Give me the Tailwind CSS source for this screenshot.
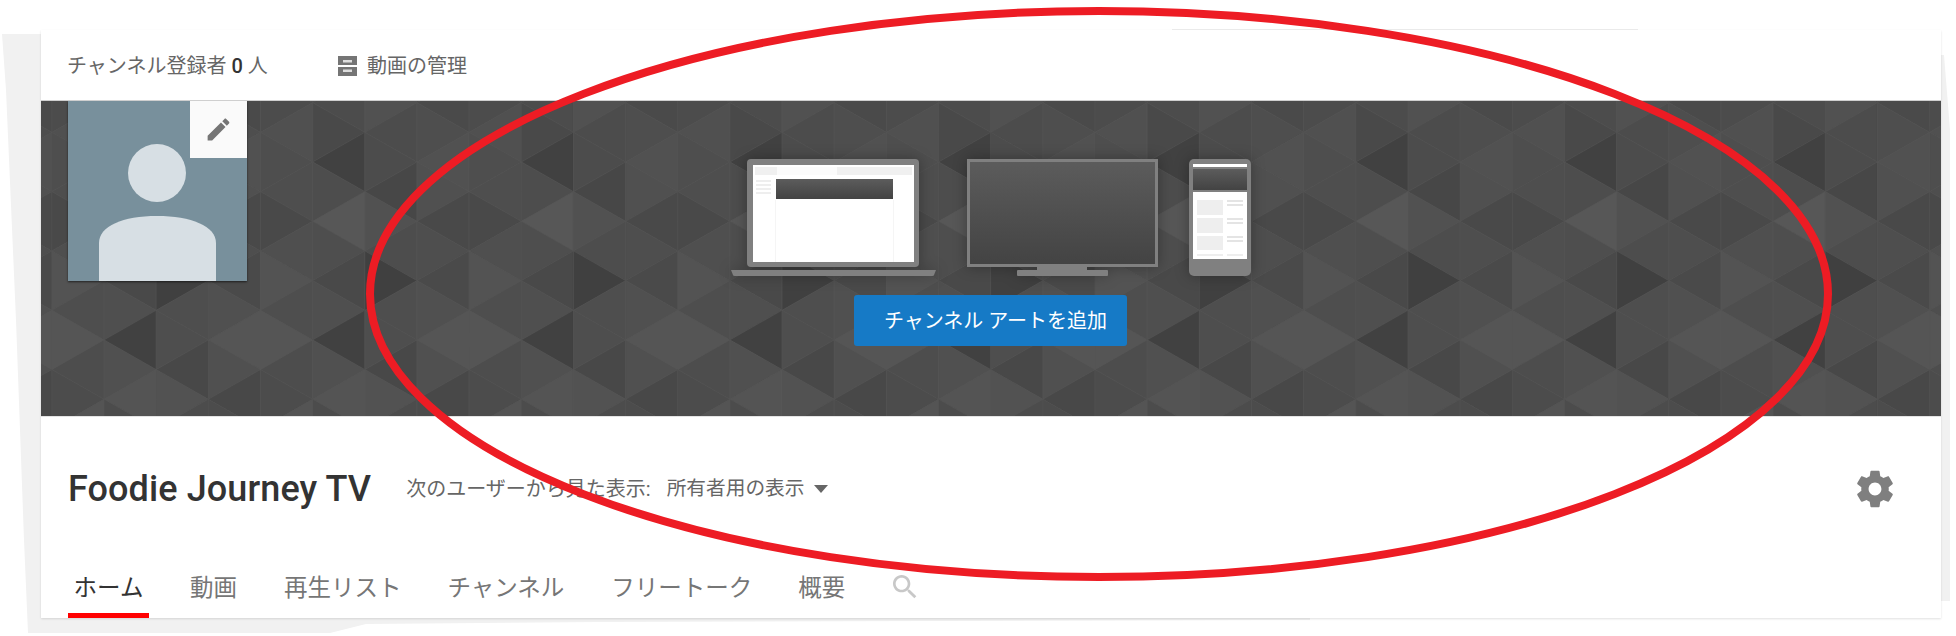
<!DOCTYPE html>
<html lang="ja">
<head>
<meta charset="utf-8">
<title>Foodie Journey TV</title>
<script src="https://cdn.jsdelivr.net/npm/@tailwindcss/browser@4"></script>
</head>
<body class="bg-white overflow-hidden">
<div class="relative w-[1956px] h-[636px] overflow-hidden bg-white font-['Roboto','Noto_Sans_CJK_JP',sans-serif]">
  <!-- torn grey edge of the pasted capture -->
  <svg class="absolute left-0 top-0" width="1956" height="636" viewBox="0 0 1956 636" fill="#f1f1f1">
    <polygon points="2,34 41,34 41,618 1310,618 1310,620 600,622 366,624 330,633 28,633 24,540 16,320 6,90"/>
    <polygon points="1941,55 1944,55 1950,130 1950,601 1941,601"/>
    <rect x="1172" y="29" width="466" height="1.5" fill="#ececec"/>
  </svg>

  <!-- channel card -->
  <div class="absolute left-[41px] top-[30px] w-[1900px] flex flex-col bg-white shadow-[0_1px_2px_rgba(0,0,0,0.12)]">
    <div class="h-[70px] flex items-center pl-[26px] pt-[2px] text-[20px] text-[#666]">
      <span class="w-[271px]">チャンネル登録者 <b class="font-medium text-[#333]">0</b> 人</span>
      <span class="flex items-center gap-[10px] text-[20px]">
        <svg width="19" height="20" viewBox="0 0 19 20"><rect width="19" height="9" fill="#757575"/><rect y="11" width="19" height="9" fill="#757575"/><rect x="5" y="4" width="9" height="2.5" fill="#ddd"/><rect x="5" y="13.5" width="9" height="2.5" fill="#ddd"/></svg>
        動画の管理
      </span>
    </div>

    <div class="relative h-[316px] border-t border-[#cfcfcf] bg-[#4c4c4c] overflow-hidden">
      <svg id="tri" class="absolute left-0 top-0" width="1900" height="316" viewBox="41 100 1900 316"></svg>

      <div class="absolute left-[27px] top-0 w-[179px] h-[180px] bg-[#78909c] shadow-[0_1px_2px_rgba(0,0,0,0.6)]">
        <svg class="absolute left-0 top-0" width="179" height="180" viewBox="0 0 179 180" fill="#d7dfe4">
          <circle cx="89" cy="72" r="29"/>
          <path d="M31 180V142C31 125 55 115 89 115S148 125 148 142V180Z"/>
        </svg>
        <div class="absolute right-0 top-0 w-[57px] h-[57px] bg-[#fafafa] flex items-center justify-center">
          <svg width="29" height="29" viewBox="0 0 24 24" fill="#757575"><path d="M3 17.25V21h3.75L17.81 9.94l-3.75-3.75L3 17.25zM20.71 7.04c.39-.39.39-1.02 0-1.41l-2.34-2.34c-.39-.39-1.02-.39-1.41 0l-1.83 1.83 3.75 3.75 1.83-1.83z"/></svg>
        </div>
      </div>

      <div class="absolute left-[690px] top-[58px] w-[520px] flex flex-col items-center">
        <svg class="drop-shadow-[0_0_7px_rgba(0,0,0,0.3)]" width="520" height="118" viewBox="731 159 520 118">
          <defs>
            <linearGradient id="g1" x1="0" y1="0" x2="0" y2="1"><stop offset="0" stop-color="#5c5c5c"/><stop offset="1" stop-color="#434343"/></linearGradient>
          </defs>
          <rect x="747" y="159" width="172" height="108" rx="4" fill="#808080"/>
          <rect x="753" y="165" width="161" height="97" fill="#fff"/>
          <rect x="755" y="167" width="157" height="8" fill="#f0f0f0"/>
          <rect x="777" y="167" width="60" height="8" fill="#fbfbfb"/>
          <rect x="756" y="180" width="15" height="2" fill="#eee"/><rect x="756" y="184" width="15" height="2" fill="#eee"/><rect x="756" y="188" width="15" height="2" fill="#eee"/><rect x="756" y="192" width="15" height="2" fill="#eee"/>
          <rect x="775" y="200" width="1" height="62" fill="#f5f5f5"/><rect x="893" y="200" width="1" height="62" fill="#f5f5f5"/>
          <rect x="776" y="179" width="117" height="20" fill="url(#g1)"/>
          <path d="M731 270H936L934 275Q934 276 932 276H735Q733 276 733 275Z" fill="#808080"/>

          <rect x="968.500" y="160.500" width="188" height="105" fill="url(#g1)" stroke="#808080" stroke-width="3"/>
          <rect x="1037" y="267" width="50" height="4" fill="#808080"/>
          <rect x="1017" y="270" width="91" height="6" rx="1" fill="#808080"/>

          <rect x="1189" y="159" width="62" height="117" rx="5" fill="#808080"/>
          <rect x="1193" y="164" width="54" height="3" fill="#fff"/>
          <rect x="1193" y="169" width="54" height="21" fill="url(#g1)"/>
          <rect x="1193" y="192" width="54" height="67" fill="#fff"/>
          <rect x="1197" y="200" width="26" height="15" fill="#eee"/><rect x="1197" y="218" width="26" height="15" fill="#eee"/><rect x="1197" y="236" width="26" height="14" fill="#eee"/>
          <rect x="1227" y="200" width="16" height="2" fill="#e4e4e4"/><rect x="1227" y="204" width="16" height="2" fill="#e4e4e4"/>
          <rect x="1227" y="218" width="16" height="2" fill="#e4e4e4"/><rect x="1227" y="222" width="16" height="2" fill="#e4e4e4"/>
          <rect x="1227" y="236" width="16" height="2" fill="#e4e4e4"/><rect x="1227" y="240" width="16" height="2" fill="#e4e4e4"/>
          <rect x="1197" y="254" width="26" height="2" fill="#eee"/><rect x="1227" y="254" width="16" height="2" fill="#eee"/>
        </svg>
        <button class="mt-[18px] w-[273px] h-[51px] ml-[-1px] rounded-[3px] bg-[#167ac6] text-white text-[20px] pl-[10px]">チャンネル アートを追加</button>
      </div>
    </div>

    <div class="h-[144px] flex items-center pl-[27px] pr-[44px] border-t border-[#e4e4e4]">
      <h1 class="text-[36px] font-medium text-[#333] leading-none tracking-[0.1px]">Foodie Journey TV</h1>
      <span class="ml-[35px] text-[20px] text-[#666]">次のユーザーから見た表示:</span>
      <span class="ml-[16px] text-[19.7px] text-[#666]">所有者用の表示</span>
      <span class="ml-[10px] w-0 h-0 border-x-[7px] border-x-transparent border-t-[8px] border-t-[#666]"></span>
      <svg class="ml-auto" width="44" height="44" viewBox="0 0 24 24" fill="#7f7f7f"><path d="M19.43 12.98c.04-.32.07-.64.07-.98s-.03-.66-.07-.98l2.11-1.65c.19-.15.24-.42.12-.64l-2-3.46c-.12-.22-.39-.3-.61-.22l-2.49 1c-.52-.4-1.08-.73-1.69-.98l-.38-2.65C14.46 2.18 14.25 2 14 2h-4c-.25 0-.46.18-.49.42l-.38 2.65c-.61.25-1.17.59-1.69.98l-2.49-1c-.23-.09-.49 0-.61.22l-2 3.46c-.13.22-.07.49.12.64l2.11 1.65c-.04.32-.07.65-.07.98s.03.66.07.98l-2.11 1.65c-.19.15-.24.42-.12.64l2 3.46c.12.22.39.3.61.22l2.49-1c.52.4 1.08.73 1.69.98l.38 2.65c.03.24.24.42.49.42h4c.25 0 .46-.18.49-.42l.38-2.65c.61-.25 1.17-.59 1.69-.98l2.49 1c.23.09.49 0 .61-.22l2-3.46c.12-.22.07-.49-.12-.64l-2.11-1.65zM12 15.5c-1.93 0-3.5-1.57-3.5-3.5s1.57-3.5 3.5-3.5 3.5 1.57 3.5 3.5-1.57 3.5-3.5 3.5z"/></svg>
    </div>

    <nav class="h-[58px] flex items-stretch pl-[27px] text-[23.5px] text-[#767676]">
      <a class="w-[81px] flex items-center justify-center pt-[4px] border-b-[5px] border-[#f00] text-[#333]">ホーム</a>
      <a class="ml-[41px] flex items-center pt-[4px] border-b-[5px] border-transparent">動画</a>
      <a class="ml-[47px] flex items-center pt-[4px] border-b-[5px] border-transparent">再生リスト</a>
      <a class="ml-[46px] flex items-center pt-[4px] border-b-[5px] border-transparent">チャンネル</a>
      <a class="ml-[47px] flex items-center pt-[4px] border-b-[5px] border-transparent">フリートーク</a>
      <a class="ml-[46px] flex items-center pt-[4px] border-b-[5px] border-transparent">概要</a>
      <span class="flex items-center ml-[44px] pb-[5px]">
        <svg width="32" height="32" viewBox="0 0 24 24" fill="#c8c8c8"><path d="M15.5 14h-.79l-.28-.27C15.41 12.59 16 11.11 16 9.5 16 5.91 13.09 3 9.5 3S3 5.91 3 9.5 5.91 16 9.5 16c1.61 0 3.09-.59 4.23-1.57l.27.28v.79l5 4.99L20.49 19l-4.99-5zm-6 0C7.01 14 5 11.99 5 9.5S7.01 5 9.5 5 14 7.01 14 9.5 11.99 14 9.5 14z"/></svg>
      </span>
    </nav>
  </div>

  <!-- red hand-drawn ellipse lying over the page -->
  <svg class="absolute left-0 top-0 pointer-events-none" width="1956" height="636" viewBox="0 0 1956 636">
    <ellipse cx="1099" cy="294" rx="729" ry="283" fill="none" stroke="#ed1c24" stroke-width="8"/>
  </svg>
</div>
<script>
  var shades = [
    ['4e','4c','50','4e','4e','49','4f','53','4e','55','4d','4c','54'],
    ['4d','4c','49','41','4d','57','4e','49','4f','41','50','54','4c'],
    ['4e','51','4c','4c','47','51','4d','40','4e','4e','48','52','4c'],
    ['4c','4a','4e','51','50','49','4e','4a','50','55','50','48','4c']
  ];
  var svg = document.getElementById('tri');
  var x0 = 260.5 - 52.16 * 8, dx = 52.16, y0 = 101.7, u = 29.66, out = '';
  for (var k = 0; k < 42; k++) {
    var s = k % 4, xL = x0 + k * dx, xR = xL + dx;
    var leftEven = (s % 2 === 1); /* b and d are the columns with even rows */
    for (var r = -1; r <= 11; r++) {
      var apexOnLeft = ((r + 2) % 2 === 0) === leftEven;
      var ax = apexOnLeft ? xL : xR, bx = apexOnLeft ? xR : xL;
      var c = '#' + shades[s][r + 1] + shades[s][r + 1] + shades[s][r + 1];
      out += '<polygon points="' + ax + ',' + (y0 + r * u) + ' ' + bx + ',' + (y0 + (r - 1) * u) + ' ' + bx + ',' + (y0 + (r + 1) * u) + '" fill="' + c + '" stroke="#5a5a5a" stroke-opacity="0.45" stroke-width="0.8"/>';
    }
  }
  svg.innerHTML = out;
</script>
</body>
</html>
